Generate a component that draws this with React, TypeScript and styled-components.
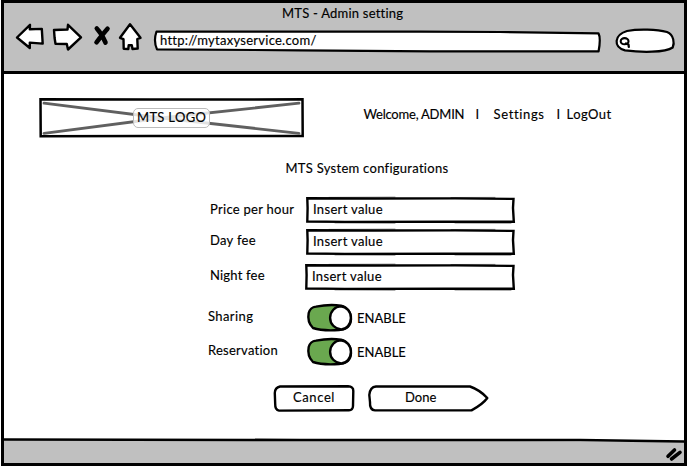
import React from "react";
import styled, { createGlobalStyle } from "styled-components";

const GlobalStyle = createGlobalStyle`
  * { box-sizing: border-box; }
  body { margin: 0; background: #fff; }
`;

const Window = styled.div`
  width: 688px;
  height: 467px;
  padding: 0 1px 1px;
  display: flex;
  font: 13px/16px Lato, "Liberation Sans", sans-serif;
  color: #000;
`;

const Frame = styled.div`
  flex: 1;
  display: flex;
  flex-direction: column;
  border: 3px solid #000;
`;

const Header = styled.header`
  height: 71px;
  background: #c0c0c0;
  border-bottom: 3px solid #000;
  padding-top: 2px;
`;

const Text = styled.span<{ $track?: number }>`
  display: block;
  white-space: nowrap;
  -webkit-text-stroke: 0.15px #000;
  letter-spacing: ${(p) => p.$track ?? 0.3}px;
`;

const TitleRow = styled.div`
  display: flex;
  padding-left: 278px;
`;

const Toolbar = styled.nav`
  display: flex;
  padding: 1px 0 0 10px;
`;

const Drawing = styled.svg`
  display: block;
  flex: none;
  fill: #fff;
  stroke: #000;
  stroke-width: 2.4;
  stroke-linejoin: round;
  stroke-linecap: round;
`;

const Outlined = styled.div<{ $w: number; $h: number; $pad: string }>`
  position: relative;
  flex: none;
  width: ${(p) => p.$w}px;
  height: ${(p) => p.$h}px;
  padding: ${(p) => p.$pad};

  > svg {
    position: absolute;
    inset: 0;
  }
  > span {
    position: relative;
  }
`;

const SketchButton = styled(Outlined).attrs({ as: "button", type: "button" })`
  display: flex;
  align-items: flex-start;
  border: 0;
  background: none;
  color: inherit;
  font: inherit;
  text-align: left;
`;

const Body = styled.main`
  flex: 1;
  padding-top: 22px;
`;

const TopBar = styled.div`
  display: flex;
  height: 44px;
  padding-left: 34px;
`;

const LogoLabel = styled.div`
  position: relative;
  width: 77px;
  height: 20px;
  padding: 0 0 0 3px;
  border: 1px solid #bbb;
  border-radius: 5px;
  background: rgba(255, 255, 255, 0.82);
`;

const Links = styled.div`
  display: grid;
  grid-template-columns: 112px 18px 63px 10px auto;
  padding: 10px 0 0 57.5px;
`;

const Heading = styled.div`
  padding: 20px 0 0 281.5px;
`;

const Form = styled.div`
  padding: 20px 0 0 203px;
`;

const Row = styled.div<{ $h: number; $drop: number; $indent?: number }>`
  display: grid;
  grid-template-columns: 98px auto;
  height: ${(p) => p.$h}px;

  > span {
    padding: ${(p) => p.$drop}px 0 0 ${(p) => p.$indent ?? 3}px;
  }
`;

const ToggleCell = styled.div`
  display: flex;
  gap: 2px;

  > span {
    padding-top: 9px;
  }
`;

const Actions = styled.div`
  display: flex;
  gap: 11px;
  padding: 15px 0 0 268px;
`;

const Footer = styled.footer`
  height: 27px;
  display: flex;
`;

type ArtProps = { box: [number, number, number, number]; children: React.ReactNode };

const Art = ({ box, children }: ArtProps) => (
  <Drawing width={box[2]} height={box[3]} viewBox={box.join(" ")} aria-hidden>
    {children}
  </Drawing>
);

const Field = ({ value, shift = 0 }: { value: string; shift?: number }) => (
  <Outlined $w={212} $h={30} $pad={`5px 0 0 ${8 - shift}px`}>
    <Art box={[0, 0, 212, 30]}>
      <path strokeWidth="1" stroke="#888" fill="none" d="M24 1.4 L90 1.1 M146 1.5 L190 1.4 M30 26.9 L90 27.2 M150 27 L206 27.2" />
      <path
        strokeLinejoin="miter"
        d={`M${2.3 - shift} 2.3 L70 2.5 L150 2.4 L208.5 2.9 L208 12 L208.8 25.8 L140 25.8 L40 25.9 L${2.3 - shift} 25.5 L${2.6 - shift} 12 Z`}
      />
    </Art>
    <Text $track={0.33}>{value}</Text>
  </Outlined>
);

const Toggle = () => (
  <Art box={[1, 0, 50, 34]}>
    <path
      fill="#6aa84f"
      d="M12 5.6 C20 4 29 3.6 37 4.6 C44 6.3 47.2 12 47 18 C46.8 25 42 28.5 35 29 C24 29.8 15 29 9 27 C5 23 3.7 17 4.7 12 C6 7.3 8 6.1 12 5.6 Z"
    />
    <path d="M36.6 5.4 C42.6 5.7 47.1 11 46.9 17 C46.7 23.5 42.6 28.4 37.2 28.4 C31 28 26 23 26.1 16.8 C26.2 10.5 31 5.4 36.6 5.4 Z" />
  </Art>
);

export default function App() {
  return (
    <>
      <GlobalStyle />
      <Window>
        <Frame>
          <Header>
            <TitleRow>
              <Text $track={0.22}>MTS - Admin setting</Text>
            </TitleRow>
            <Toolbar>
              <Art box={[14, 22, 35, 34]}>
                <path d="M17 37.5 L30 24.8 L29.8 29.2 L41.8 28.9 L42.7 43.6 L29.8 42.6 L29.8 48 Z" />
              </Art>
              <Art box={[49, 22, 41, 34]}>
                <path d="M54 30 L67.5 29.5 L68 24.8 L81 37.3 L68 49.5 L66.8 44 L55.5 43.8 L54.6 38 Z" />
              </Art>
              <Art box={[90, 22, 25, 34]}>
                <path strokeWidth="4.6" fill="none" d="M96.8 28.5 Q102 34 105.5 42.5 M107.5 28.8 Q103 34 96.5 42.3" />
              </Art>
              <Art box={[115, 22, 35, 34]}>
                <path d="M130 24.3 L120 37.8 L123.5 39.2 L123.7 48.8 L128.3 49 L128.7 45.2 L131.8 45.2 L132.5 49 L137.7 48.5 L137.3 39 L140.5 37.8 Z" />
              </Art>
              <Outlined $w={463} $h={34} $pad="10px 0 0 10px">
                <Art box={[150, 22, 463, 34]}>
                  <path
                    strokeWidth="2.2"
                    d="M156.5 31.5 L420 31.7 L500 32 L598.5 33.4 Q601 38 598.6 51.3 L430 51.3 L300 50.3 L157 49.4 Q153.2 41 156.5 31.5 Z"
                  />
                </Art>
                <Text $track={0.26}>http://mytaxyservice.com/</Text>
              </Outlined>
              <Art box={[613, 22, 66, 34]}>
                <path
                  strokeWidth="2.2"
                  d="M627 31 C638 28.8 657 29.2 667 32 C674 35 674.6 43 672.7 47.5 C665 52.8 641 52.4 625 50.4 C613 47 614 35 627 31 Z"
                />
                <ellipse cx="624.6" cy="41.2" rx="3.9" ry="3.1" strokeWidth="2.1" />
                <path strokeWidth="2.3" fill="none" d="M626 43.5 L628.5 44.6 L628.8 46.8" />
              </Art>
            </Toolbar>
          </Header>
          <Body>
            <TopBar>
              <Outlined $w={268} $h={44} $pad="12px 0 0 95px">
                <Art box={[38, 96, 268, 44]}>
                  <path d="M40.5 99.3 L150 99.6 L302.5 99.3 L302.7 136 L150 136 L40.7 136.3 Z" strokeWidth="2.5" strokeLinejoin="miter" />
                  <path stroke="#606060" strokeWidth="2.8" d="M44 103.2 L170 119 L299 133.3 M44 133.3 L170 117 L299 103.2" fill="none" />
                </Art>
                <LogoLabel>
                  <Text $track={0.32}>MTS LOGO</Text>
                </LogoLabel>
              </Outlined>
              <Links>
                <Text $track={-0.22}>Welcome, ADMIN</Text>
                <Text>I</Text>
                <Text $track={0.65}>Settings</Text>
                <Text>I</Text>
                <Text $track={0.45}>LogOut</Text>
              </Links>
            </TopBar>
            <Heading>
              <Text $track={0.28}>MTS System configurations</Text>
            </Heading>
            <Form>
              <Row $h={32} $drop={5}>
                <Text $track={0.28}>Price per hour</Text>
                <Field value="Insert value" />
              </Row>
              <Row $h={35} $drop={4}>
                <Text $track={0.3}>Day fee</Text>
                <Field value="Insert value" />
              </Row>
              <Row $h={38} $drop={4}>
                <Text $track={0.2}>Night fee</Text>
                <Field value="Insert value" shift={1} />
              </Row>
              <Row $h={34} $drop={7} $indent={1}>
                <Text $track={0.4}>Sharing</Text>
                <ToggleCell>
                  <Toggle />
                  <Text $track={0}>ENABLE</Text>
                </ToggleCell>
              </Row>
              <Row $h={34} $drop={7} $indent={1}>
                <Text $track={0.25}>Reservation</Text>
                <ToggleCell>
                  <Toggle />
                  <Text $track={0}>ENABLE</Text>
                </ToggleCell>
              </Row>
            </Form>
            <Actions>
              <SketchButton $w={84} $h={30} $pad="5px 0 0 21px">
                <Art box={[272, 384, 84, 30]}>
                  <path d="M280 386.5 L348 386.3 Q353.5 386.5 353.3 391 L353 406 Q352.8 410.3 349 410.3 L279 410.6 Q275 410 275.2 404 L274.8 393 Q275 387.5 280 386.5 Z" />
                </Art>
                <Text $track={0.6}>Cancel</Text>
              </SketchButton>
              <SketchButton $w={124} $h={30} $pad="5px 0 0 38px">
                <Art box={[367, 384, 124, 30]}>
                  <path d="M376 386.5 L470 386.5 Q480 390 487.3 398 Q483 404 471.5 410.4 L375 410.4 Q369.5 410 370 402 L369.3 395 Q370 387 376 386.5 Z" />
                </Art>
                <Text $track={0}>Done</Text>
              </SketchButton>
            </Actions>
          </Body>
          <Footer>
            <Art box={[4, 436, 680, 27]}>
              <path stroke="none" fill="#c0c0c0" d="M4 440 L684 441.5 L684 463 L4 463 Z" />
              <path strokeWidth="2.6" d="M4 439.5 L300 440 L580 440 L684 441.5" />
              <path strokeWidth="3.6" d="M668 456.3 L674.5 450 M671.5 459 L680 452.3" />
            </Art>
          </Footer>
        </Frame>
      </Window>
    </>
  );
}
